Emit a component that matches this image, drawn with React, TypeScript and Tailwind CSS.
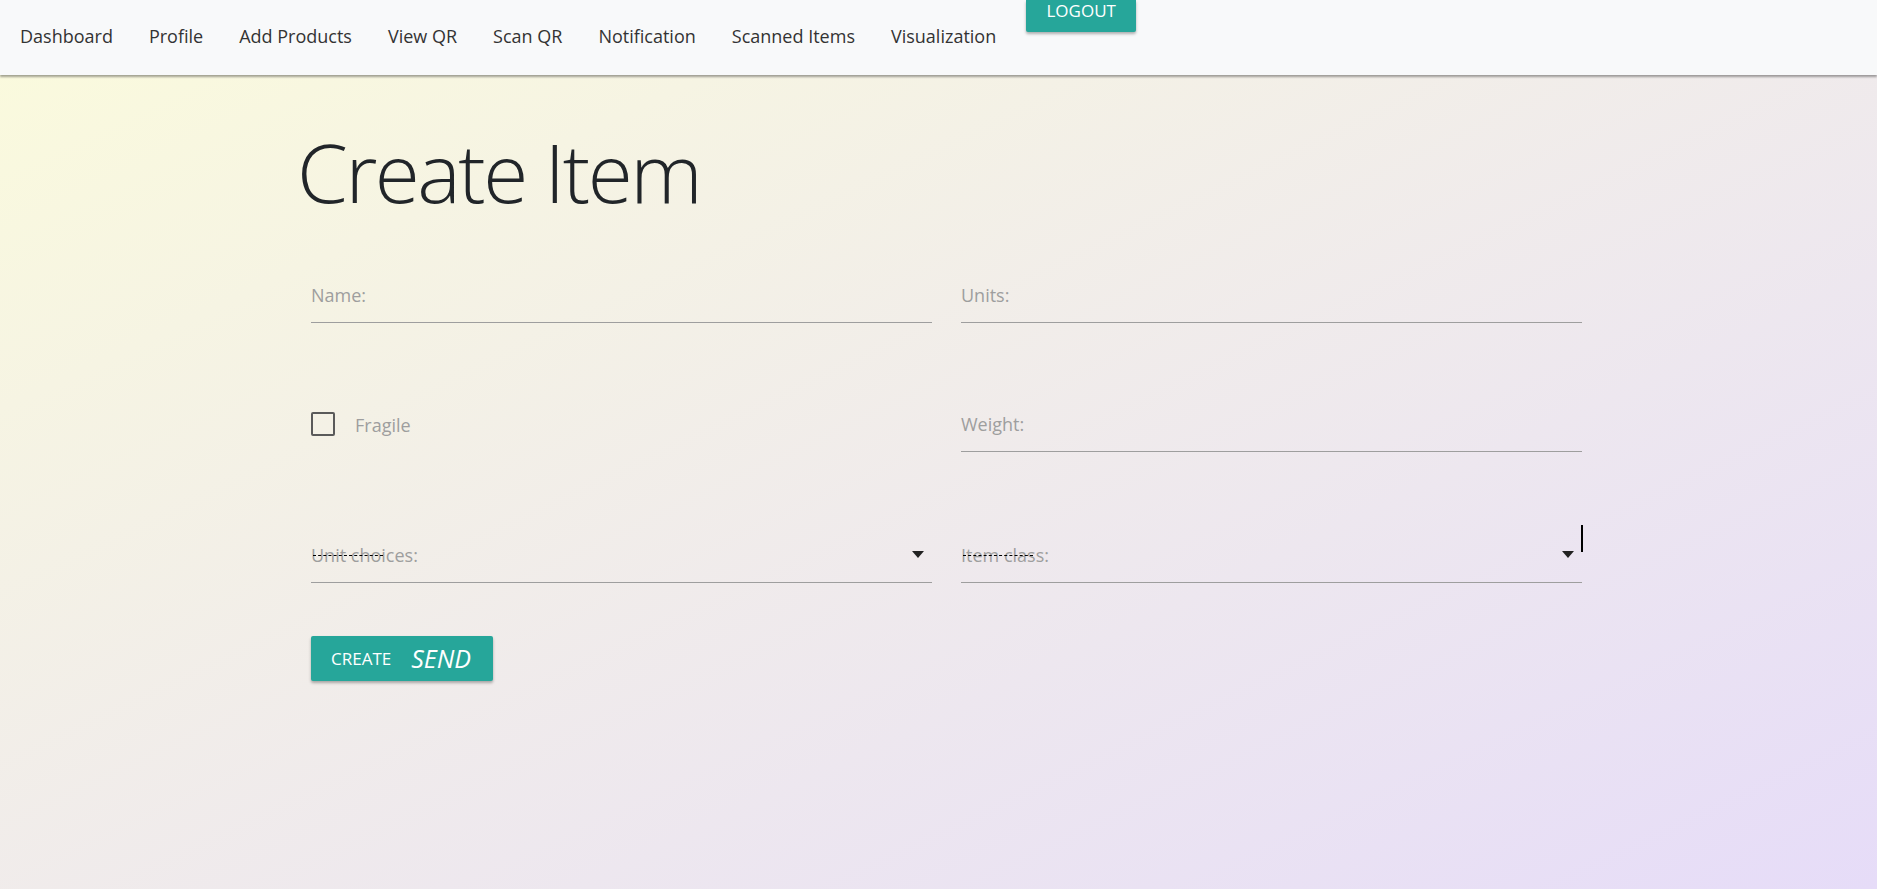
import React from 'react';

const navLinks = [
  'Dashboard',
  'Profile',
  'Add Products',
  'View QR',
  'Scan QR',
  'Notification',
  'Scanned Items',
  'Visualization',
];

function TextField({ label }: { label: string }) {
  return (
    <div className="flex h-[56px] items-end border-b border-[#9e9e9e] pb-[16px]">
      <span className="text-[18px] leading-[22px] text-[#9e9e9e]">{label}</span>
    </div>
  );
}

function SelectField({ label, cursor }: { label: string; cursor?: boolean }) {
  return (
    <div className="relative flex h-[56px] items-end justify-between border-b border-[#9e9e9e] pb-[16px]">
      <span className="relative text-[18px] leading-[22px] text-[#9e9e9e]">
        {label}
        {/* dashed strike over the placeholder */}
        <span className="absolute left-[2px] top-[11px] w-[70px] border-t border-dashed border-black" />
      </span>
      <svg width="12" height="7" viewBox="0 0 12 7" className="mb-[8px] mr-[8px]">
        <path d="M0 0 L12 0 L6 7 Z" fill="#222" />
      </svg>
      {cursor && <span className="absolute right-[-1px] top-[-2px] h-[27px] w-[2px] bg-black" />}
    </div>
  );
}

export default function App() {
  return (
    <div
      className="min-h-screen bg-gradient-to-br from-[#fbfbdc] to-[#e6dcf8]"
      style={{ fontFamily: '"Open Sans", "Noto Sans", sans-serif' }}
    >
      {/* Navbar */}
      <nav className="flex h-[75px] items-start bg-[#f8f9fa] pl-[20px] shadow-[0_2px_2px_rgba(0,0,0,0.35)]">
        <ul className="flex h-full items-center gap-[36px] pb-[2px]">
          {navLinks.map((link) => (
            <li key={link} className="text-[18px] text-[#333]">
              {link}
            </li>
          ))}
        </ul>
        <button className="ml-[30px] flex h-[32px] w-[110px] justify-center rounded-b-[2px] bg-[#26a69a] text-[17px] leading-[22px] text-white shadow-[0_2px_3px_rgba(0,0,0,0.3)]">
          LOGOUT
        </button>
      </nav>

      <div className="pl-[297px] pr-[295px] pt-[47px]">
        <h1 className="text-[82px] font-light leading-[1.2] tracking-[-2.5px] text-[#212529]">Create Item</h1>

        <div className="ml-[14px] mt-[47px]">
          <div className="grid grid-cols-2 gap-x-[29px]">
            <TextField label="Name:" />
            <TextField label="Units:" />
          </div>

          <div className="mt-[73px] grid grid-cols-2 gap-x-[29px]">
            <div className="flex h-[56px] items-center">
              <span className="h-[24px] w-[24px] rounded-[2px] border-2 border-[#5a5a5a]" />
              <span className="ml-[20px] pt-[3px] text-[18px] text-[#9e9e9e]">Fragile</span>
            </div>
            <TextField label="Weight:" />
          </div>

          <div className="mt-[75px] grid grid-cols-2 gap-x-[29px]">
            <SelectField label="Unit choices:" />
            <SelectField label="Item class:" cursor />
          </div>

          <button className="mt-[53px] flex h-[45px] items-center gap-[20px] rounded-[2px] bg-[#26a69a] pl-[20px] pr-[22px] text-white shadow-[0_2px_3px_rgba(0,0,0,0.3)]">
            <span className="text-[17px]">CREATE</span>
            <i className="text-[25px]">SEND</i>
          </button>
        </div>
      </div>
    </div>
  );
}
